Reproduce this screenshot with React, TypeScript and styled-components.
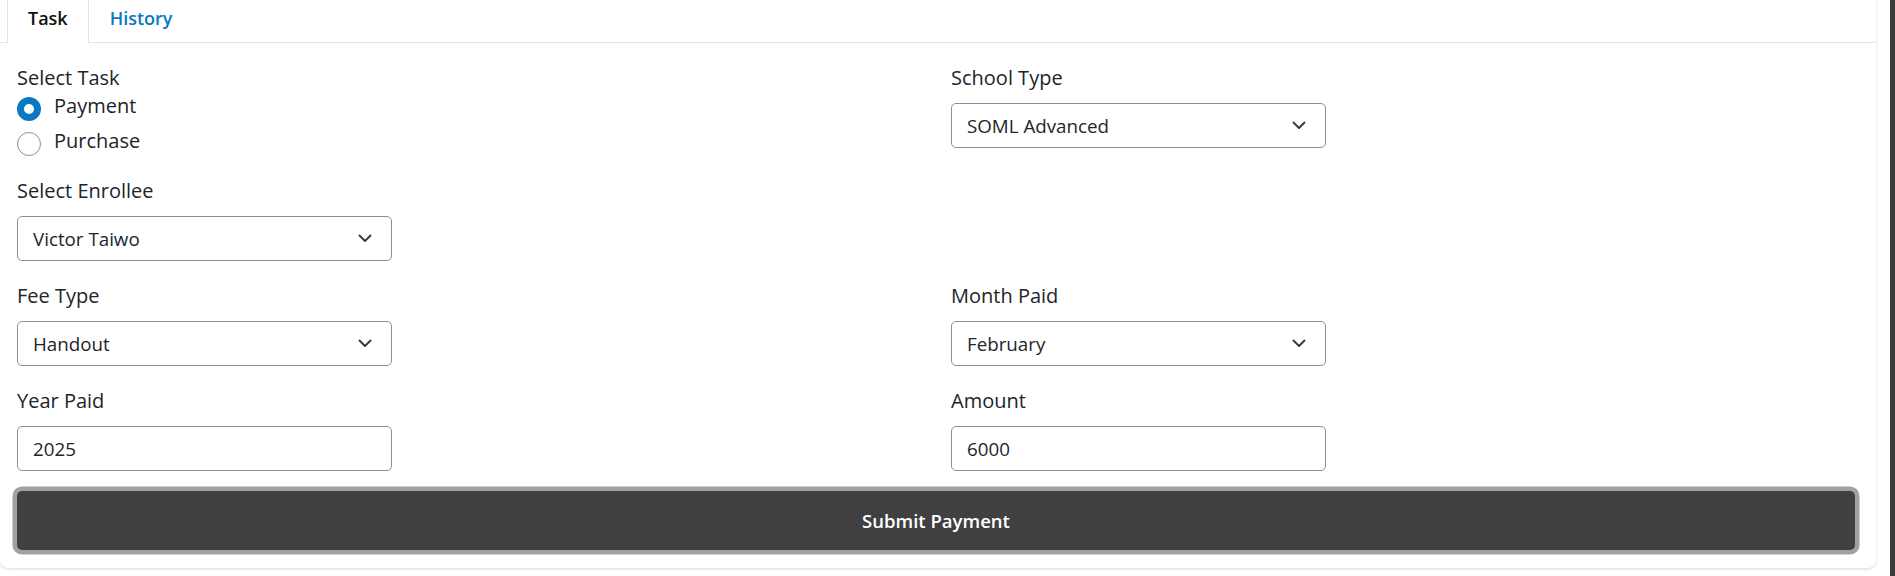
import React from "react";
import styled, { createGlobalStyle } from "styled-components";

const GlobalStyle = createGlobalStyle`
  html, body {
    margin: 0;
    padding: 0;
    background: #ffffff;
    font-family: "Open Sans", "Noto Sans", "Liberation Sans", sans-serif;
    color: #212529;
  }
  * { box-sizing: border-box; }
`;

const Page = styled.div`
  display: flex;
  align-items: flex-start;
  min-height: 576px;
  overflow: hidden;
`;

const Card = styled.div`
  flex: 1;
  margin-right: 14px;
  background: #ffffff;
  border-radius: 0 0 8px 8px;
  box-shadow: 0 1px 3px rgba(0, 0, 0, 0.16);
`;

const Edge = styled.div`
  width: 5px;
  align-self: stretch;
  background: #3c3c3c;
`;

const TabBar = styled.div`
  display: flex;
  align-items: flex-end;
  height: 43px;
  padding-left: 7px;
  border-bottom: 1px solid #e2e4e7;
`;

const Tab = styled.div<{ $active?: boolean }>`
  height: 43px;
  margin-bottom: -1px;
  padding: 5px 20px 0 20px;
  font-size: 18px;
  line-height: 26px;
  font-weight: 600;
  color: ${(p) => (p.$active ? "#111111" : "#0a78c2")};
  background: ${(p) => (p.$active ? "#ffffff" : "transparent")};
  border-left: 1px solid ${(p) => (p.$active ? "#e2e4e7" : "transparent")};
  border-right: 1px solid ${(p) => (p.$active ? "#e2e4e7" : "transparent")};
`;

const Form = styled.div`
  padding: 20px 21px 18px 17px;
`;

const Grid = styled.div`
  display: grid;
  grid-template-columns: 1fr 1fr;
  column-gap: 30px;
  row-gap: 20px;
  margin-bottom: 20px;
`;

const Field = styled.div`
  display: flex;
  flex-direction: column;
`;

const Label = styled.div<{ $tight?: boolean }>`
  font-size: 20px;
  line-height: 30px;
  margin-bottom: ${(p) => (p.$tight ? "-2px" : "10px")};
`;

const RadioList = styled.div`
  display: flex;
  flex-direction: column;
  gap: 5px;
`;

const RadioRow = styled.label`
  display: flex;
  align-items: flex-start;
  gap: 13px;
  height: 30px;
  font-size: 20px;
  line-height: 30px;
`;

const RadioCircle = styled.span<{ $checked?: boolean }>`
  flex: none;
  display: block;
  width: 24px;
  height: 24px;
  margin-top: 6px;
  border-radius: 50%;
  background: #ffffff;
  border: ${(p) => (p.$checked ? "7.5px solid #0a78c2" : "1px solid #8a9099")};
`;

const SelectBox = styled.div`
  width: 375px;
  height: 45px;
  display: flex;
  align-items: center;
  justify-content: space-between;
  padding: 0 19px 0 15px;
  border: 1px solid #8a9099;
  border-radius: 5px;
  background: #ffffff;
  font-size: 18.75px;
  color: #212529;
`;

const SubmitButton = styled.button`
  display: block;
  width: 100%;
  height: 59px;
  border: none;
  border-radius: 5px;
  background: #404040;
  box-shadow: 0 0 0 4.5px #a1a1a1;
  color: #ffffff;
  font-family: "Open Sans", "Noto Sans", "Liberation Sans", sans-serif;
  font-size: 18.5px;
  font-weight: 600;
  cursor: pointer;
`;

const Chevron = () => (
  <svg width="14" height="9" viewBox="0 0 14 9" fill="none">
    <polyline
      points="1.5,1.5 7,7 12.5,1.5"
      stroke="#343a40"
      strokeWidth="1.9"
      strokeLinecap="round"
      strokeLinejoin="round"
    />
  </svg>
);

const Select = ({ value }: { value: string }) => (
  <SelectBox>
    <span>{value}</span>
    <Chevron />
  </SelectBox>
);

const Input = ({ value }: { value: string }) => (
  <SelectBox>
    <span>{value}</span>
  </SelectBox>
);

export default function App() {
  return (
    <>
      <GlobalStyle />
      <Page>
        <Card>
          <TabBar>
            <Tab $active>Task</Tab>
            <Tab>History</Tab>
          </TabBar>
          <Form>
            <Grid>
              <Field>
                <Label $tight>Select Task</Label>
                <RadioList>
                  <RadioRow>
                    <RadioCircle $checked />
                    Payment
                  </RadioRow>
                  <RadioRow>
                    <RadioCircle />
                    Purchase
                  </RadioRow>
                </RadioList>
              </Field>
              <Field>
                <Label>School Type</Label>
                <Select value="SOML Advanced" />
              </Field>
              <Field>
                <Label>Select Enrollee</Label>
                <Select value="Victor Taiwo" />
              </Field>
              <div />
              <Field>
                <Label>Fee Type</Label>
                <Select value="Handout" />
              </Field>
              <Field>
                <Label>Month Paid</Label>
                <Select value="February" />
              </Field>
              <Field>
                <Label>Year Paid</Label>
                <Input value="2025" />
              </Field>
              <Field>
                <Label>Amount</Label>
                <Input value="6000" />
              </Field>
            </Grid>
            <SubmitButton>Submit Payment</SubmitButton>
          </Form>
        </Card>
        <Edge />
      </Page>
    </>
  );
}
